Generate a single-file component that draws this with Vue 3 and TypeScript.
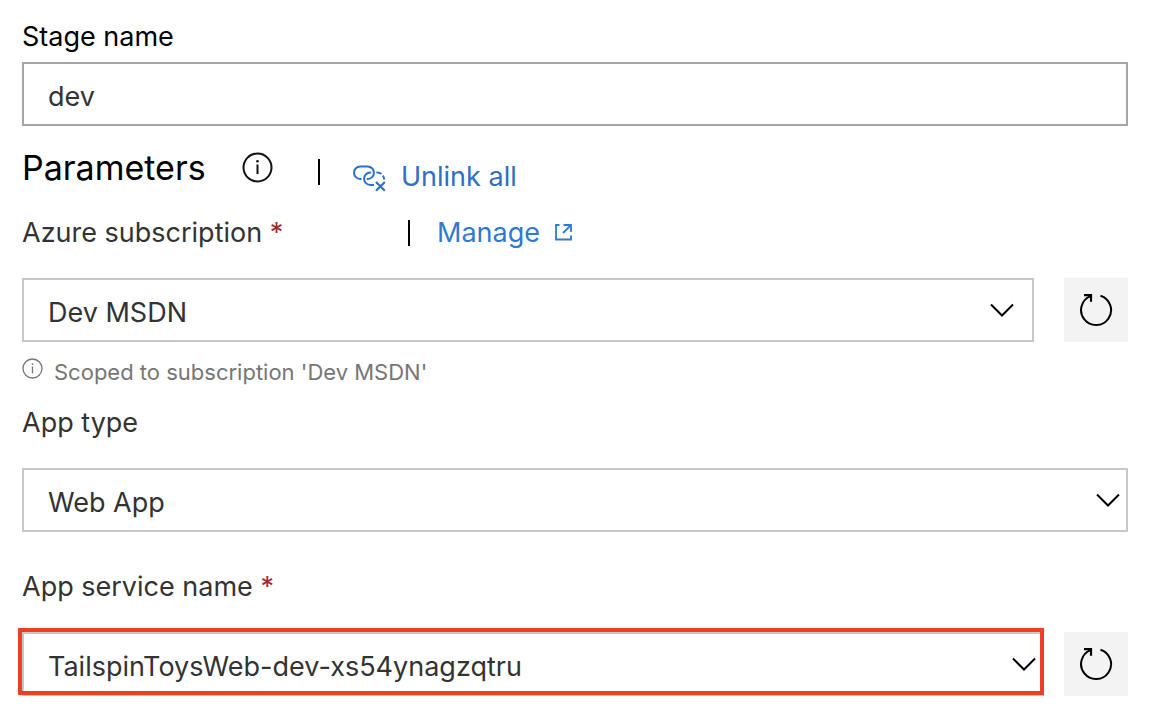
<script setup lang="ts">
import { ref } from 'vue'

const stageName = ref('dev')
const subscription = ref('Dev MSDN')
const appType = ref('Web App')
const appService = ref('TailspinToysWeb-dev-xs54ynagzqtru')
</script>

<template>
  <form class="panel" @submit.prevent>
    <label class="label stage-label" for="stage">Stage name</label>
    <input id="stage" v-model="stageName" class="control text-box" type="text" />

    <div class="heading-row">
      <h2 class="heading">Parameters</h2>
      <svg class="info" viewBox="0 0 32 32" width="32" height="32" aria-hidden="true">
        <circle cx="16.5" cy="15.5" r="14" fill="none" stroke="currentColor" stroke-width="2" />
        <path d="M16.5 12.5V22" stroke="currentColor" stroke-width="2" />
        <circle cx="16.5" cy="9.3" r="1.3" fill="currentColor" />
      </svg>
      <span class="divider"></span>
      <a class="link unlink" href="#">
        <svg viewBox="0 0 34 30" width="34" height="30" fill="none" stroke="currentColor" stroke-width="2" aria-hidden="true">
          <path d="M9.5 17H8.3A6.3 6.3 0 0 1 8.3 4.4H15.6A6.3 6.3 0 0 1 15.6 17H14.8" />
          <path d="M19.2 10.4H18.4A6.3 6.3 0 0 0 18.4 23H22" />
          <path d="M24.4 10.4H25.4A6.2 6.2 0 0 1 29.4 11.9M30.8 13.6A6.2 6.2 0 0 1 32.2 17.6" />
          <path d="M24 20L32.8 28.8M32.8 20L24 28.8" stroke-width="2.2" />
        </svg>
        <span>Unlink all</span>
      </a>
    </div>

    <div class="label-row">
      <label class="label subscription-label" for="subscription">Azure subscription <span class="required">*</span></label>
      <span class="divider"></span>
      <a class="link manage" href="#">
        <span>Manage</span>
        <svg viewBox="0 0 18 18" width="18" height="18" fill="none" stroke="currentColor" stroke-width="1.8" aria-hidden="true">
          <path d="M4.5 1H1V15.5H16V11.5" />
          <path d="M8.5 1H16V8M15.7 1.3L8 9" />
        </svg>
      </a>
    </div>

    <div class="field-row">
      <div class="select-wrap">
        <select id="subscription" v-model="subscription" class="control">
          <option>Dev MSDN</option>
        </select>
        <svg class="chevron inset" viewBox="0 0 24 14" width="24" height="14" aria-hidden="true">
          <path d="M1 1.5L12 12.5L23 1.5" fill="none" stroke="currentColor" stroke-width="2" />
        </svg>
      </div>
      <button class="refresh" type="button" aria-label="Refresh subscriptions">
        <svg viewBox="0 0 34 34" width="34" height="34" fill="none" stroke="currentColor" stroke-width="2" aria-hidden="true">
          <path d="M21.5 2.7A15 15 0 1 1 11.5 3.1" />
          <path d="M5 2.2H12V8.8" stroke-width="2.2" />
        </svg>
      </button>
    </div>

    <p class="hint">
      <svg viewBox="0 0 22 22" width="22" height="22" aria-hidden="true">
        <circle cx="10.5" cy="10.5" r="9.5" fill="none" stroke="currentColor" stroke-width="1.3" />
        <path d="M10.5 8.5V15.2" stroke="currentColor" stroke-width="1.3" />
        <circle cx="10.5" cy="6.2" r="0.9" fill="currentColor" />
      </svg>
      <span>Scoped to subscription 'Dev MSDN'</span>
    </p>

    <label class="label type-label" for="type">App type</label>
    <div class="select-wrap">
      <select id="type" v-model="appType" class="control">
        <option>Web App</option>
      </select>
      <svg class="chevron" viewBox="0 0 24 14" width="24" height="14" aria-hidden="true">
        <path d="M1 1.5L12 12.5L23 1.5" fill="none" stroke="currentColor" stroke-width="2" />
      </svg>
    </div>

    <label class="label service-label" for="service">App service name <span class="required">*</span></label>
    <div class="field-row close">
      <div class="select-wrap highlighted">
        <select id="service" v-model="appService" class="control">
          <option>TailspinToysWeb-dev-xs54ynagzqtru</option>
        </select>
        <svg class="chevron" viewBox="0 0 24 14" width="24" height="14" aria-hidden="true">
          <path d="M1 1.5L12 12.5L23 1.5" fill="none" stroke="currentColor" stroke-width="2" />
        </svg>
      </div>
      <button class="refresh" type="button" aria-label="Refresh app services">
        <svg viewBox="0 0 34 34" width="34" height="34" fill="none" stroke="currentColor" stroke-width="2" aria-hidden="true">
          <path d="M21.5 2.7A15 15 0 1 1 11.5 3.1" />
          <path d="M5 2.2H12V8.8" stroke-width="2.2" />
        </svg>
      </button>
    </div>
  </form>
</template>

<style>
body {
  margin: 0;
  background: #fff;
}
</style>

<style scoped>
.panel {
  box-sizing: border-box;
  display: flex;
  flex-direction: column;
  padding: 20px 24px 26px 22px;
  font: 27px/34px Inter, "Liberation Sans", sans-serif;
  color: #333;
}
.label {
  display: block;
}
.stage-label {
  color: #000;
  margin-bottom: 8px;
}
.control {
  box-sizing: border-box;
  display: block;
  width: 100%;
  height: 64px;
  margin: 0;
  padding: 6px 24px 0;
  border: 2px solid #c8c8c8;
  border-radius: 0;
  background: #fff;
  color: #333;
  font: inherit;
  appearance: none;
  outline: none;
}
.text-box {
  padding-top: 4px;
  border-color: #a6a6a6;
}
.heading-row {
  display: flex;
  align-items: center;
  height: 44px;
  margin-top: 20px;
}
.heading {
  margin: 0;
  font-size: 34px;
  font-weight: 400;
  line-height: 44px;
  color: #000;
  width: 219px;
}
.info {
  color: #111;
  margin-right: 45px;
}
.divider {
  width: 2px;
  height: 26px;
  background: #000;
}
.heading-row .divider {
  margin-top: 8px;
}
.link {
  display: flex;
  align-items: center;
  color: #2e6fc7;
  text-decoration: none;
}
.unlink {
  gap: 15px;
  margin: 18px 0 0 32px;
}
.label-row {
  display: flex;
  align-items: center;
  height: 34px;
  margin-top: 26px;
}
.subscription-label {
  width: 386px;
}
.required {
  color: #a4262c;
}
.manage {
  gap: 15px;
  margin-left: 27px;
  color: #3079d0;
}
.field-row {
  display: flex;
  gap: 30px;
  margin-top: 28px;
}
.field-row.close {
  gap: 20px;
}
.select-wrap {
  position: relative;
  flex: 1;
}
.chevron {
  position: absolute;
  right: 8px;
  top: 25px;
  color: #000;
  pointer-events: none;
}
.chevron.inset {
  right: 20px;
}
.highlighted::after {
  content: "";
  position: absolute;
  inset: -4px 0 1px -4px;
  border: 4px solid #ee3f24;
  pointer-events: none;
}
.refresh {
  display: flex;
  align-items: center;
  justify-content: center;
  width: 64px;
  height: 64px;
  padding: 0;
  border: 0;
  background: #f3f3f3;
  color: #000;
}
.hint {
  display: flex;
  gap: 10px;
  margin: 16px 0 0;
  font-size: 22px;
  line-height: 28px;
  color: #767676;
}
.type-label {
  margin: 20px 0 28px;
}
.service-label {
  margin-top: 38px;
}
</style>
